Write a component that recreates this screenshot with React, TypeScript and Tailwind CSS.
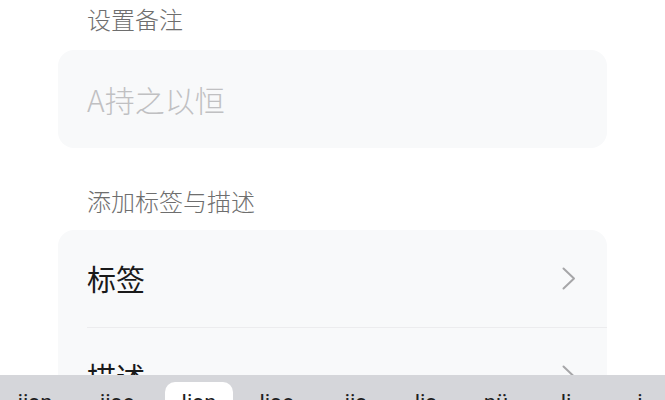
const candidates = [
    { text: "jian", w: "w-[70px]" },
    { text: "jiao", w: "w-[95px]" },
    { text: "lian", w: "w-[68px]", active: true },
    { text: "liao", w: "w-[88px]" },
    { text: "jia", w: "w-[70px]" },
    { text: "lia", w: "w-[70px]" },
    { text: "nü", w: "w-[70px]" },
    { text: "li", w: "w-[70px]" },
    { text: "i", w: "w-[78px]" },
]

function Chevron() {
    return (
        <svg width="14" height="23" viewBox="0 0 14 23" fill="none" className="shrink-0">
            <polyline points="1.5,1.5 12,11.5 1.5,21.5" stroke="#a6a6a8" strokeWidth="2" strokeLinecap="round" strokeLinejoin="round" />
        </svg>
    )
}

function Row({ label, divider }: { label: string; divider?: boolean }) {
    return (
        <div>
            <div className="h-[97px] flex items-center pl-[29px] pr-[31px]">
                <span className="text-[29px] leading-none text-[#1a1a1a] flex-1">{label}</span>
                <Chevron />
            </div>
            {divider && <div className="ml-[29px] h-px bg-[#ececee]" />}
        </div>
    )
}

export default function App() {
    return (
        <div
            className="relative w-[665px] h-[400px] overflow-hidden bg-white"
            style={{ fontFamily: '"Noto Sans CJK SC", "Noto Sans", sans-serif' }}
        >
            <div className="px-[58px]">
                {/* Remark */}
                <div className="mt-[3px] h-[32px] pl-[29px] flex items-center text-[24px] font-light text-[#6e6e6e]">
                    设置备注
                </div>
                <div className="mt-[15px] h-[98px] rounded-[16px] bg-[#f8f9fa] pl-[29px] flex items-center">
                    <span className="text-[30px] leading-none font-light text-[#c0c0c2]">A持之以恒</span>
                </div>

                {/* Tags & description */}
                <div className="mt-[37px] h-[32px] pl-[29px] flex items-center text-[24px] font-light text-[#6e6e6e]">
                    添加标签与描述
                </div>
                <div className="mt-[13px] rounded-t-[16px] bg-[#f8f9fa]">
                    <Row label="标签" divider />
                    <Row label="描述" />
                </div>
            </div>

            {/* Keyboard candidate bar */}
            <div
                className="absolute left-0 right-0 top-[375px] h-[25px] bg-[#d5d6da] flex items-start"
                style={{ fontFamily: 'Roboto, "Noto Sans", sans-serif' }}
            >
                {candidates.map((c) => (
                    <div
                        key={c.text}
                        className={`${c.w} shrink-0 h-[25px] flex justify-center ${c.active ? "mt-[7px] bg-white rounded-t-[10px]" : ""}`}
                    >
                        <span className={`text-[22px] leading-none text-[#1f1f1f] ${c.active ? "pt-[10px]" : "pt-[17px]"}`}>
                            {c.text}
                        </span>
                    </div>
                ))}
            </div>
        </div>
    )
}
